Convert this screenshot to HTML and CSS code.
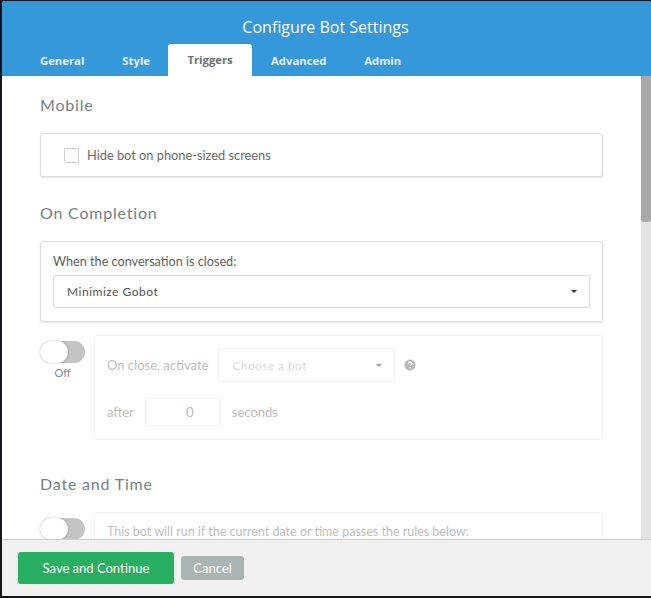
FILE: index.html
```html
<!DOCTYPE html>
<html lang="en">
<head>
<meta charset="utf-8">
<title>Configure Bot Settings</title>
<link rel="stylesheet" href="styles.css">
</head>
<body>
<div class="modal">
  <header class="modal-head">
    <h1 class="modal-title">Configure Bot Settings</h1>
    <nav class="tabs">
      <a class="tab tab-general">General</a>
      <a class="tab tab-style">Style</a>
      <a class="tab tab-active">Triggers</a>
      <a class="tab tab-advanced">Advanced</a>
      <a class="tab tab-admin">Admin</a>
    </nav>
  </header>
  <div class="modal-main">
    <div class="content">
      <h2 class="section-title first">Mobile</h2>
      <div class="card card-check">
        <span class="checkbox"></span>
        <span class="check-label">Hide bot on phone-sized screens</span>
      </div>
      <h2 class="section-title">On Completion</h2>
      <div class="card card-select">
        <div class="field-label">When the conversation is closed:</div>
        <div class="select">
          <span>Minimize Gobot</span>
          <span class="caret"></span>
        </div>
      </div>
      <div class="toggle-row toggle-row-close">
        <div class="toggle-col">
          <span class="toggle"><span class="knob"></span></span>
          <span class="toggle-text">Off</span>
        </div>
        <div class="panel panel-close">
          <div class="panel-row">
            <span>On close, activate</span>
            <div class="select select-bot">
              <span class="placeholder">Choose a bot</span>
              <span class="caret caret-muted"></span>
            </div>
            <svg class="help" viewBox="0 0 12 12" width="12" height="12" aria-hidden="true">
              <circle cx="6" cy="6" r="5.6" fill="#b8b8b8"/>
              <path d="M4.2 4.7c0-1 .8-1.6 1.8-1.6s1.9.6 1.9 1.5c0 1.3-1.5 1.3-1.5 2.4" fill="none" stroke="#fff" stroke-width="1.3"/>
              <rect x="5.6" y="8" width="1.4" height="1.4" fill="#fff"/>
            </svg>
          </div>
          <div class="panel-row panel-row-second">
            <span>after</span>
            <div class="num-input">0</div>
            <span>seconds</span>
          </div>
        </div>
      </div>
      <h2 class="section-title section-date">Date and Time</h2>
      <div class="toggle-row">
        <div class="toggle-col toggle-col-date">
          <span class="toggle"><span class="knob"></span></span>
        </div>
        <div class="panel panel-date">This bot will run if the current date or time passes the rules below:</div>
      </div>
    </div>
    <div class="scrollbar"><div class="thumb"></div></div>
  </div>
  <footer class="modal-foot">
    <button class="btn btn-save">Save and Continue</button>
    <button class="btn btn-cancel">Cancel</button>
  </footer>
</div>
</body>
</html>
```
FILE: styles.css
```css
* { box-sizing: border-box; }
html, body { margin: 0; height: 100%; }
body {
  background: #14161c;
  font-family: "Lato", "Open Sans", sans-serif;
  overflow: hidden;
}
.modal {
  margin: 1px 0 0 2px;
  height: 595px;
  display: flex;
  flex-direction: column;
  background: #fff;
  border-radius: 3px 3px 0 0;
  overflow: hidden;
}
.modal-head {
  background: #3498db;
  height: 75px;
  flex: none;
  display: flex;
  flex-direction: column;
}
.modal-title {
  margin: 0;
  padding-top: 16px;
  height: 43px;
  font: 500 16px/20px "Open Sans", sans-serif;
  color: #fff;
  text-align: center;
  padding-right: 2px;
}
.tabs { display: flex; padding-left: 38px; height: 32px; }
.tab {
  font: 700 11.3px/34px "Open Sans", sans-serif;
  color: #e6f3fc;
}
.tab-style { margin-left: 38px; }
.tab-active {
  margin-left: 18px;
  width: 84px;
  background: #fff;
  color: #6b6f73;
  text-align: center;
  border-radius: 3px 3px 0 0;
  line-height: 32px;
}
.tab-advanced { margin-left: 19px; }
.tab-admin { margin-left: 38px; }
.modal-main { flex: 1; min-height: 0; display: flex; }
.content {
  flex: 1;
  min-width: 0;
  overflow: hidden;
  padding: 0 38px 0 38px;
}
.scrollbar { width: 10px; flex: none; background: #e3e3e3; }
.thumb { height: 146px; background: #a8a8a8; border-radius: 0 0 3px 3px; }
.section-title {
  margin: 0;
  font: 400 16px/20px "Lato", sans-serif;
  letter-spacing: .8px;
  color: #76808a;
}
.section-title.first { padding-top: 19px; }
.card {
  background: #fff;
  border: 1px solid #dcdcdc;
  border-radius: 3px;
  box-shadow: 0 1px 2px rgba(0,0,0,.12);
}
.card-check {
  height: 44px;
  margin: 18px 0 26px;
  padding-left: 23px;
  display: flex;
  align-items: center;
  font-size: 12.8px;
  color: #6a6a6a;
}
.checkbox {
  width: 15px;
  height: 15px;
  border: 1px solid #cfcfcf;
  border-radius: 2px;
  margin-right: 8px;
}
.card-select {
  height: 81px;
  margin: 18px 0 13px;
  padding: 11px 12px 0;
}
.field-label { font-size: 12.65px; line-height: 18px; color: #5f5f5f; margin-bottom: 4px; }
.select {
  height: 33px;
  border: 1px solid #dcdcdc;
  border-radius: 2px;
  padding: 0 12px 0 13px;
  display: flex;
  align-items: center;
  justify-content: space-between;
  font-size: 12px;
  letter-spacing: .5px;
  color: #555;
}
.caret {
  width: 0;
  height: 0;
  border: 3.5px solid transparent;
  border-top-color: #333;
  border-bottom: 0;
}
.caret-muted { border-top-color: #999; }
.toggle-row { display: flex; gap: 9px; }
.toggle-col {
  width: 45px;
  flex: none;
  padding-top: 6px;
  display: flex;
  flex-direction: column;
  align-items: center;
}
.toggle {
  width: 45px;
  height: 22px;
  background: #c4c4c4;
  border-radius: 11px;
  display: block;
}
.knob {
  display: block;
  width: 28px;
  height: 22px;
  background: #fff;
  border-radius: 11px;
  box-shadow: 0 0 2px rgba(0,0,0,.3);
}
.toggle-text { font-size: 11px; line-height: 14px; color: #888; margin-top: 3px; }
.panel {
  flex: 1;
  min-width: 0;
  border: 1px solid #f0f0f0;
  border-radius: 3px;
  font-size: 13px;
  color: #bdbdbd;
}
.panel-close { height: 105px; padding: 12px 12px 0; }
.panel-row { display: flex; align-items: center; height: 34px; }
.panel-row-second { height: 28px; margin-top: 16px; }
.select-bot {
  width: 177px;
  margin-left: 10px;
  border-color: #eee;
  height: 34px;
  padding-right: 12px;
}
.placeholder { color: #d8d8d8; letter-spacing: .4px; }
.help { margin-left: 9px; }
.num-input {
  width: 76px;
  height: 28px;
  margin: 0 11px 0 11px;
  border: 1px solid #eee;
  border-radius: 2px;
  padding-left: 14px;
  text-align: center;
  font-size: 14px;
  line-height: 26px;
  color: #bbb;
}
.section-date { margin-top: 34px; margin-bottom: 18px; }
.panel-date { height: 60px; padding: 10px 12px 0; line-height: 18px; font-size: 12.5px; }
.toggle-col-date { padding-top: 6px; }
.modal-foot {
  height: 57px;
  flex: none;
  background: #f0f0f0;
  border-top: 1px solid #cfcfcf;
  padding-left: 16px;
  display: flex;
  align-items: center;
  gap: 7px;
}
.btn {
  border: 0;
  border-radius: 3px;
  color: #fff;
  font-family: "Lato", sans-serif;
  font-size: 13px;
  padding: 0;
}
.btn-save { width: 156px; height: 32px; background: #27ae60; }
.btn-cancel { width: 63px; height: 24px; background: #a9b5b5; }
```
